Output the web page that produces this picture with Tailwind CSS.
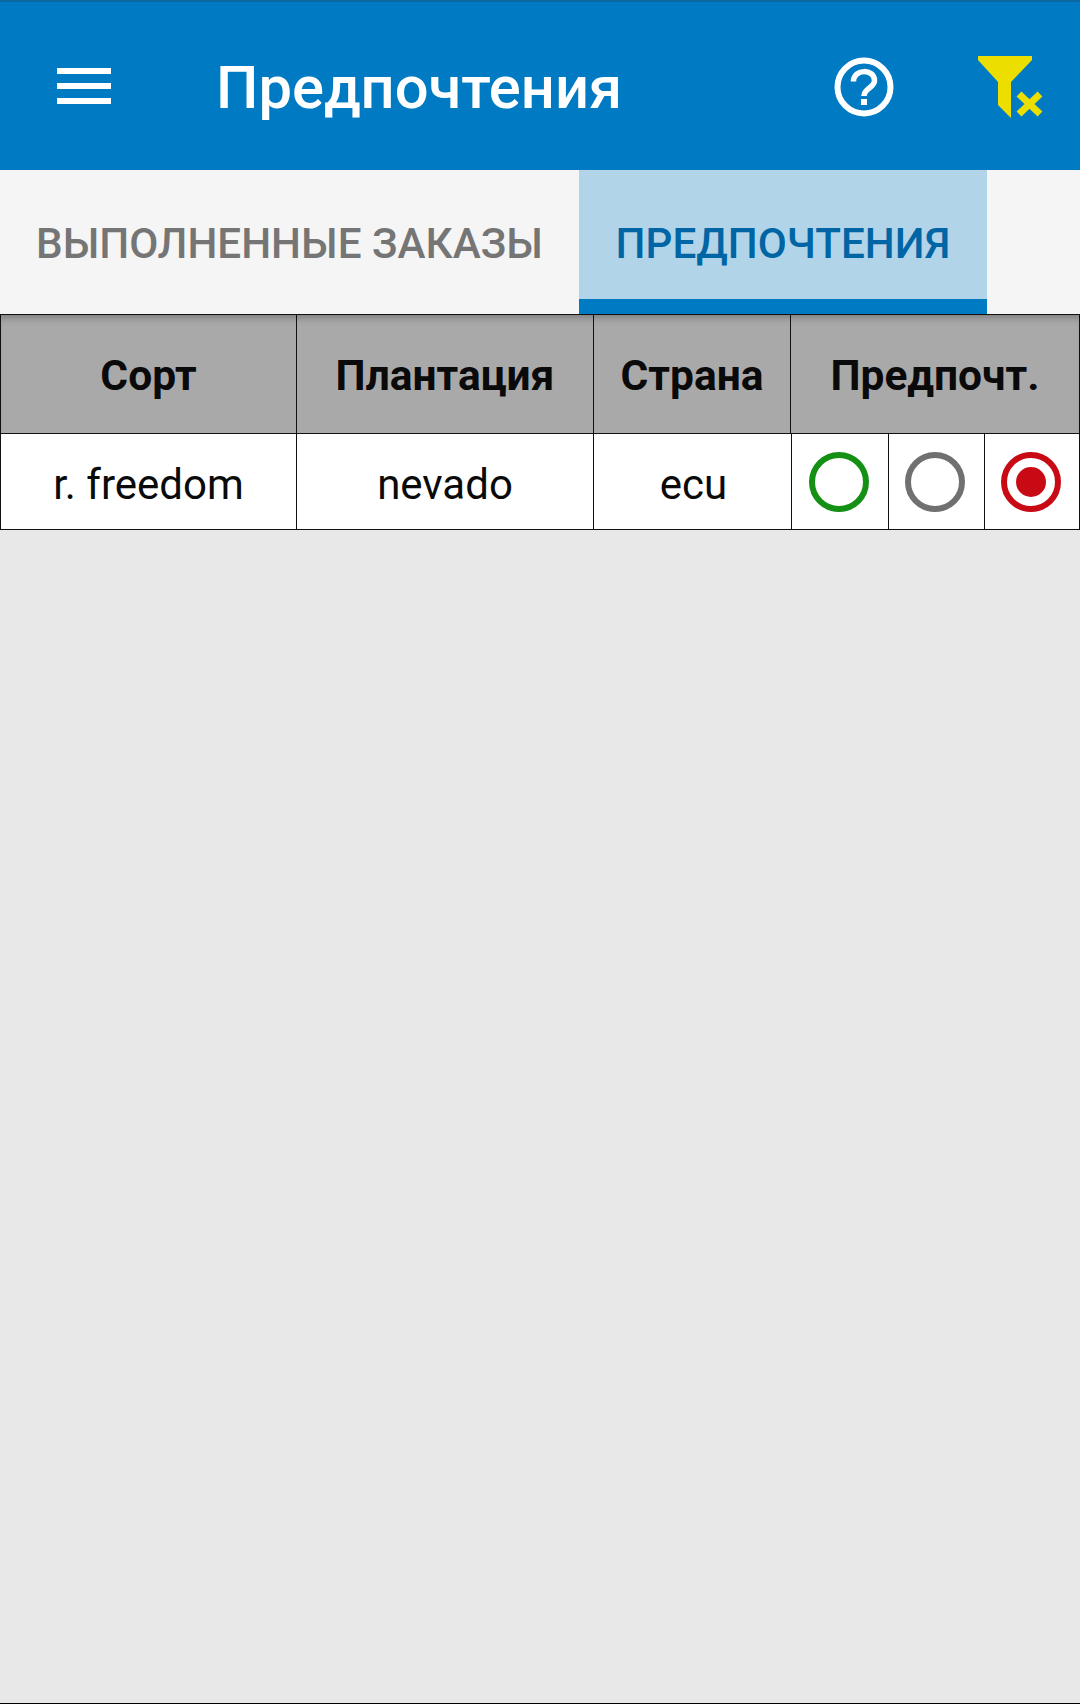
<!DOCTYPE html>
<html lang="ru">
<head>
  <meta charset="UTF-8" />
  <title>Предпочтения</title>
  <script src="https://cdn.jsdelivr.net/npm/@tailwindcss/browser@4"></script>
</head>
<body class="w-[1080px] h-[1704px] flex flex-col overflow-hidden bg-[#e8e8e8] font-['Roboto',sans-serif]">

  <!-- Toolbar -->
  <header class="h-[170px] shrink-0 flex items-center bg-[#007bc3] border-t-[2px] border-[#0a689f]">
    <button class="ml-[57px] w-[54px] h-[36px] flex flex-col justify-between">
      <span class="block h-[6px] bg-white"></span>
      <span class="block h-[6px] bg-white"></span>
      <span class="block h-[6px] bg-white"></span>
    </button>
    <h1 class="ml-[105px] flex-1 text-[59.700px] leading-[70px] font-medium text-white mt-[4px]">Предпочтения</h1>
    <svg class="mt-[2px]" width="62" height="62" viewBox="0 0 62 62" fill="none">
      <circle cx="31" cy="31" r="26.500" stroke="white" stroke-width="6" />
      <path d="M20.500 25.500C20.500 12.500 41.500 12.500 41.500 24.500C41.500 32 31 32 31 40" stroke="white" stroke-width="5.500" />
      <rect x="28" y="43" width="6" height="6" fill="white" />
    </svg>
    <svg class="ml-[83px] mr-[36px] mt-[2px]" width="66" height="64" viewBox="978 55 66 64">
      <path d="M978 56H1032V60L1011 82V118L998 105V82L978 60Z" fill="#ecdf00" />
      <path d="M1019 94L1040 114M1040 94L1019 114" stroke="#ecdf00" stroke-width="7" fill="none" />
    </svg>
  </header>

  <!-- Tabs -->
  <nav class="h-[144px] shrink-0 flex bg-[#f5f5f5]">
    <div class="w-[579px] pl-[36px] pt-[49px] text-[42.200px] leading-[50px] font-medium text-[#757575]">ВЫПОЛНЕННЫЕ ЗАКАЗЫ</div>
    <div class="w-[408px] flex justify-center pt-[49px] text-[42.200px] leading-[50px] font-medium text-[#0065a5] bg-[#b2d4e8] border-b-[15px] border-[#007bc3]">ПРЕДПОЧТЕНИЯ</div>
  </nav>

  <!-- Table head -->
  <div class="h-[120px] shrink-0 grid grid-cols-[296px_297px_197px_1fr] bg-[#a9a9a9] border border-[#111] text-[42.500px] font-bold text-[#0a0a0a] shadow-[inset_0_8px_8px_-6px_rgba(0,0,0,0.3)]">
    <div class="flex items-center justify-center pt-[4px] border-r border-[#111]">Сорт</div>
    <div class="flex items-center justify-center pt-[4px] border-r border-[#111]">Плантация</div>
    <div class="flex items-center justify-center pt-[4px] border-r border-[#111]">Страна</div>
    <div class="flex items-center justify-center pt-[4px]">Предпочт.</div>
  </div>

  <!-- Table row -->
  <div class="h-[96px] shrink-0 grid grid-cols-[296px_297px_198px_97px_96px_1fr] bg-white border border-t-0 border-[#111] text-[42px] text-[#0a0a0a]">
    <div class="flex items-center justify-center pt-[6px] border-r border-[#111]">r. freedom</div>
    <div class="flex items-center justify-center pt-[6px] border-r border-[#111]">nevado</div>
    <div class="flex items-center justify-center pt-[6px] pl-[2px] border-r border-[#111]">ecu</div>
    <div class="flex items-center justify-center border-r border-[#111]">
      <span class="block w-[60px] h-[60px] rounded-full border-[6px] border-[#149014] ml-[-3px]"></span>
    </div>
    <div class="flex items-center justify-center border-r border-[#111]">
      <span class="block w-[60px] h-[60px] rounded-full border-[6px] border-[#707070] ml-[-3px]"></span>
    </div>
    <div class="flex items-center justify-center">
      <span class="flex items-center justify-center w-[60px] h-[60px] rounded-full border-[6px] border-[#c70a14] ml-[-3px]">
        <span class="block w-[30px] h-[30px] rounded-full bg-[#c70a14]"></span>
      </span>
    </div>
  </div>

  <div class="flex-1"></div>
  <div class="h-[1px] shrink-0 bg-black"></div>
</body>
</html>
